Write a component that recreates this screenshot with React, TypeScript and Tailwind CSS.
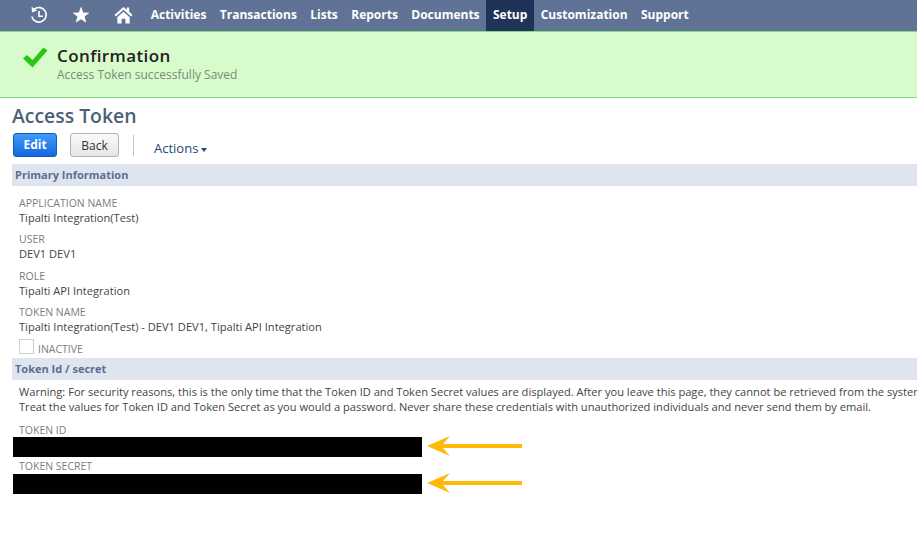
import React from 'react';

const navItems = ['Activities', 'Transactions', 'Lists', 'Reports', 'Documents', 'Setup', 'Customization', 'Support'];

const Field: React.FC<{ label: string; value: string; className?: string }> = ({ label, value, className }) => (
  <div className={className}>
    <div className="text-[10.5px] leading-[14px] uppercase text-[#7c7c7c]">{label}</div>
    <div className="text-[11.1px] leading-[15px] text-[#444]">{value}</div>
  </div>
);

const SectionBar: React.FC<{ title: string }> = ({ title }) => (
  <div className="ml-3 h-[22px] bg-[#dfe5ef] pl-[3px] text-[11px] leading-[22px] font-bold text-[#5a6f8f]">{title}</div>
);

const Arrow: React.FC<{ className: string }> = ({ className }) => (
  <svg className={className} width="96" height="20" viewBox="0 0 96 20">
    <path d="M0 10 L23 0 L16 8 L95 8 L95 12 L16 12 L23 20 Z" fill="#ffba08" />
  </svg>
);

const App: React.FC = () => {
  return (
    <div className="relative h-[533px] w-[917px] overflow-hidden bg-white font-['Open_Sans',sans-serif]">
      <nav className="flex h-[31px] items-stretch bg-[#607396] pl-[29px]">
        <div className="flex w-[115px] items-center pb-px">
          <svg width="20" height="20" viewBox="0 0 20 20" fill="none" stroke="white" strokeWidth="1.6">
            <path d="M5.2 4.2 A7.3 7.3 0 1 1 2.8 11.5" />
            <path d="M2.6 1.8 L3 7.4 L8.2 5.6 Z" fill="white" stroke="none" />
            <path d="M10 6 V11.2 H14" strokeWidth="1.6" />
          </svg>
          <svg className="ml-[23px]" width="18" height="18" viewBox="0 0 18 18">
            <path d="M9 0.5 L11.2 6.4 L17.5 6.7 L12.6 10.6 L14.3 16.8 L9 13.3 L3.7 16.8 L5.4 10.6 L0.5 6.7 L6.8 6.4 Z" fill="white" />
          </svg>
          <svg className="ml-[24px]" width="19" height="18" viewBox="0 0 20 19">
            <path d="M0.5 9.5 L10 1 L13.5 4 V1.5 H16 V6.2 L19.5 9.5 L18 11 L10 4 L2 11 Z" fill="white" />
            <path d="M3.5 12 L10 6.2 L16.5 12 V18.5 H12 V13.5 H8 V18.5 H3.5 Z" fill="white" />
          </svg>
        </div>
        <div className="flex items-stretch">
          {navItems.map((item) => (
            <div
              key={item}
              className={`flex items-center px-[6.7px] pb-[2px] text-[12px] font-bold text-white ${item === 'Setup' ? 'bg-[#1f3358]' : ''}`}
            >
              {item}
            </div>
          ))}
        </div>
      </nav>

      <div className="flex h-[67px] items-start border-y border-y-[#7fdc7f] bg-[#d7fbcb] pl-[23px]">
        <svg className="mt-[15px]" width="25" height="21" viewBox="0 0 25 21">
          <path d="M0 11.5 L4 8 L9.5 13 L20.5 0.5 L24.5 3.5 L9.5 20.5 Z" fill="#2ac712" />
        </svg>
        <div className="ml-[9px] mt-[13px]">
          <div className="text-[17px] leading-[22px] font-semibold tracking-[0.4px] text-[#222]">Confirmation</div>
          <div className="text-[12px] leading-[16px] text-[#7a8a78]">Access Token successfully Saved</div>
        </div>
      </div>

      <h1 className="ml-3 mt-[5px] text-[19.4px] leading-[26px] font-semibold text-[#4d5f79]">Access Token</h1>

      <div className="ml-[13px] mt-[4px] flex h-[24px] items-center">
        <button className="h-[24px] w-[44px] rounded-[3px] border border-[#125ab2] bg-gradient-to-b from-[#3f9bf8] to-[#1467e0] text-[12px] font-bold text-white">
          Edit
        </button>
        <button className="ml-[13px] h-[24px] w-[49px] rounded-[3px] border border-[#b2b2b2] bg-gradient-to-b from-[#fafafa] to-[#e5e5e5] pt-[2px] text-[12px] font-medium text-[#333]">
          Back
        </button>
        <div className="ml-[14px] h-[21px] w-px bg-[#c4c4c4]" />
        <div className="ml-[20px] mt-[8px] flex items-center text-[13px] text-[#27496f]">
          Actions
          <span className="ml-[3px] mt-[2px] h-0 w-0 border-x-[3.5px] border-t-[4px] border-x-transparent border-t-[#27496f]" />
        </div>
      </div>

      <div className="mt-[7px]">
        <SectionBar title="Primary Information" />
      </div>

      <div className="ml-[19px] mt-[10px] flex flex-col gap-[7.4px]">
        <Field label="Application Name" value="Tipalti Integration(Test)" />
        <Field label="User" value="DEV1 DEV1" />
        <Field label="Role" value="Tipalti API Integration" />
        <Field label="Token Name" value="Tipalti Integration(Test) - DEV1 DEV1, Tipalti API Integration" />
      </div>

      <div className="ml-[19px] mt-[3px] flex h-[18px] items-end">
        <div className="mb-px h-[15px] w-[15px] border border-[#d0d0d0] bg-white" />
        <span className="ml-1 -mb-px text-[10.5px] leading-[14px] text-[#7c7c7c]">INACTIVE</span>
      </div>

      <div className="mt-[3px]">
        <SectionBar title="Token Id / secret" />
      </div>

      <div className="ml-[19px] mt-[4px] whitespace-nowrap text-[11.1px] leading-[15px] text-[#444]">
        <div>
          Warning: For security reasons, this is the only time that the Token ID and Token Secret values are displayed. After you leave this page, they cannot be retrieved from the system.
        </div>
        <div>
          Treat the values for Token ID and Token Secret as you would a password. Never share these credentials with unauthorized individuals and never send them by email.
        </div>
      </div>

      <div className="ml-[19px] mt-[9px] text-[10.5px] leading-[14px] text-[#7c7c7c]">TOKEN ID</div>
      <div className="ml-[13px] h-[20px] w-[409px] bg-black" />
      <div className="ml-[19px] mt-[2px] text-[10.5px] leading-[14px] text-[#7c7c7c]">TOKEN SECRET</div>
      <div className="ml-[13px] mt-px h-[20px] w-[409px] bg-black" />

      <Arrow className="absolute left-[427px] top-[436px]" />
      <Arrow className="absolute left-[427px] top-[473px]" />
    </div>
  );
};

export default App;
